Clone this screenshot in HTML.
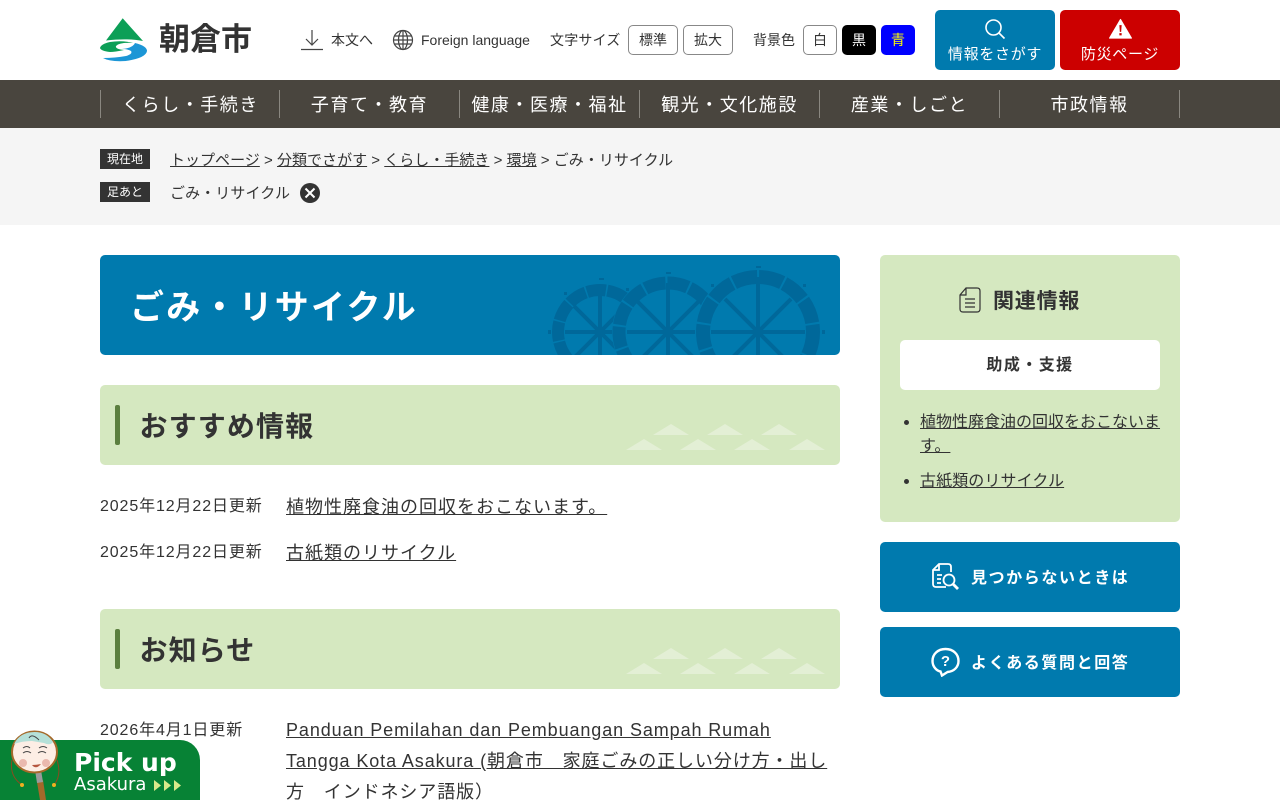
<!DOCTYPE html>
<html lang="ja"><head><meta charset="utf-8"><title>ごみ・リサイクル</title>
<style>
*{box-sizing:border-box}
html,body{margin:0;padding:0;width:1280px;height:800px;overflow:hidden;background:#fff}
body{font-family:"Liberation Sans","Noto Sans CJK JP",sans-serif;color:#333;position:relative}
.a{position:absolute;white-space:nowrap}
a{color:#333;text-decoration:underline}
.btn{position:absolute;border:1px solid #888;border-radius:5px;background:#fff;font-size:14px;text-align:center;line-height:28px;height:30px;color:#333}
.nav{position:absolute;top:90px;height:28px;width:180px;border-left:1px solid #8a8780;color:#fff;font-size:18px;letter-spacing:.085em;line-height:30px;text-align:center}
.lbl{position:absolute;left:100px;width:50px;height:20px;background:#333;color:#fff;font-size:12px;line-height:21px;text-align:center}
.h2{position:absolute;left:100px;width:740px;height:80px;background:#d5e8c0;border-radius:5px;overflow:hidden}
.h2 i{position:absolute;left:15px;top:20px;width:5px;height:40px;background:#5b7f3f;border-radius:2px}
.h2 b{position:absolute;left:39.500px;top:22px;font-size:28px;line-height:40px;letter-spacing:.04em;color:#333;font-weight:700;white-space:nowrap}
.h2 svg{position:absolute;left:0;top:0}
.date{position:absolute;left:100px;font-size:16px;letter-spacing:.055em;white-space:nowrap;line-height:24px}
.lnk{position:absolute;left:286px;font-size:18px;letter-spacing:1px;line-height:31px;white-space:nowrap}
.blue{position:absolute;left:880px;width:300px;height:70px;background:#007aae;border-radius:5px}
</style></head><body>

<!-- logo -->
<svg class="a" style="left:100px;top:18px" width="48" height="44" viewBox="0 0 48 44">
<path d="M22.700 0.300L43 23Q28 20 6 22.500Z" fill="#0c9f57"/>
<path d="M10 24Q22 22 33 25Q20 24 16 28Q15 31 24 32Q15 34 10 34Q1 33 0 30Q1 26 10 24Z" fill="#0c9f57"/>
<path d="M35 25Q47 28 47 33Q46 40 26 43Q10 44 3 40Q15 40 26 38Q33 36 31 33Q28 31 22 31Q33 30 35 25Z" fill="#1c96d6"/>
</svg>
<div class="a" style="left:159px;top:20px;font-size:31px;line-height:40px;font-weight:700;color:#333">朝倉市</div>

<!-- utility -->
<svg class="a" style="left:300px;top:29px" width="24" height="22" viewBox="0 0 24 22" fill="none" stroke="#444" stroke-width="1.200"><path d="M12 1V15M6 10L12 16L18 10M1 20.500H23"/></svg>
<div class="a" style="left:331px;top:30px;font-size:14px;line-height:20px">本文へ</div>
<svg class="a" style="left:392px;top:29px" width="22" height="22" viewBox="0 0 22 22" fill="none" stroke="#444" stroke-width="1.200"><circle cx="11" cy="11" r="9.500"/><ellipse cx="11" cy="11" rx="4.500" ry="9.500"/><path d="M11 1.500V20.500M2.500 7H19.500M2.500 15H19.500M1.500 11H20.500"/></svg>
<div class="a" style="left:421px;top:30px;font-size:14px;line-height:20px">Foreign language</div>
<div class="a" style="left:550px;top:30px;font-size:14px;line-height:20px;letter-spacing:.2px">文字サイズ</div>
<div class="btn" style="left:628px;top:25px;width:50px">標準</div>
<div class="btn" style="left:683px;top:25px;width:50px">拡大</div>
<div class="a" style="left:753px;top:30px;font-size:14px;line-height:20px">背景色</div>
<div class="btn" style="left:803px;top:25px;width:34px">白</div>
<div class="btn" style="left:842px;top:25px;width:34px;background:#000;border-color:#000;color:#fff">黒</div>
<div class="btn" style="left:881px;top:25px;width:34px;background:#00f;border-color:#00f;color:#ff0">青</div>

<div class="a" style="left:935px;top:10px;width:120px;height:60px;background:#007aae;border-radius:5px"></div>
<svg class="a" style="left:984px;top:18px" width="22" height="22" viewBox="0 0 22 22" fill="none" stroke="#fff" stroke-width="1.600"><circle cx="9.500" cy="9.500" r="7.500"/><path d="M15 15L20.500 20.500"/></svg>
<div class="a" style="left:935px;top:43px;width:120px;text-align:center;color:#fff;font-size:15px;line-height:23px;letter-spacing:.7px">情報をさがす</div>
<div class="a" style="left:1060px;top:10px;width:120px;height:60px;background:#c00;border-radius:5px"></div>
<svg class="a" style="left:1109px;top:18px" width="23" height="21" viewBox="0 0 24 21"><path d="M12 1L23.500 20.500H.5Z" fill="#fff" stroke="#fff" stroke-linejoin="round"/><path d="M10.800 7H13.200L12.700 14H11.300ZM10.800 15.300H13.200V17.700H10.800Z" fill="#c00"/></svg>
<div class="a" style="left:1060px;top:43px;width:120px;text-align:center;color:#fff;font-size:15px;line-height:23px;letter-spacing:.7px">防災ページ</div>

<!-- nav -->
<div class="a" style="left:0;top:80px;width:1280px;height:48px;background:#49453e"></div>
<div class="nav" style="left:100px">くらし・手続き</div>
<div class="nav" style="left:279px">子育て・教育</div>
<div class="nav" style="left:459px">健康・医療・福祉</div>
<div class="nav" style="left:639px">観光・文化施設</div>
<div class="nav" style="left:819px">産業・しごと</div>
<div class="nav" style="left:999px;width:181px;border-right:1px solid #8a8780">市政情報</div>

<!-- breadcrumb -->
<div class="a" style="left:0;top:128px;width:1280px;height:97px;background:#f5f5f5"></div>
<div class="lbl" style="top:149px">現在地</div>
<div class="a" style="left:170px;top:150px;font-size:15px;line-height:22px;letter-spacing:.02px"><a href="#">トップページ</a> &gt; <a href="#">分類でさがす</a> &gt; <a href="#">くらし・手続き</a> &gt; <a href="#">環境</a> &gt; ごみ・リサイクル</div>
<div class="lbl" style="top:182px">足あと</div>
<div class="a" style="left:170px;top:183px;font-size:15px;line-height:22px;letter-spacing:.1px">ごみ・リサイクル</div>
<svg class="a" style="left:300px;top:183px" width="20" height="20" viewBox="0 0 20 20"><circle cx="10" cy="10" r="10" fill="#333"/><path d="M5.500 5.500L14.500 14.500M14.500 5.500L5.500 14.500" stroke="#fff" stroke-width="2"/></svg>

<!-- title -->
<div class="a" style="left:100px;top:255px;width:740px;height:100px;background:#007aae;border-radius:5px;overflow:hidden">
<svg style="position:absolute;left:430px;top:0" width="310" height="100" viewBox="530 255 310 100" fill="none" stroke="#00689a">
<g fill="#00689a" stroke="none"><rect x="548" y="330" width="3" height="4"/><rect x="609" y="330" width="3" height="4"/><rect x="692" y="330" width="3" height="4"/><rect x="822" y="330" width="3" height="4"/><rect x="599" y="278" width="5" height="2"/><rect x="666" y="272" width="5" height="2"/><rect x="756" y="266" width="5" height="2"/><rect x="564" y="292" width="3" height="3"/><rect x="626" y="288" width="3" height="3"/><rect x="711" y="284" width="3" height="3"/><rect x="803" y="284" width="3" height="3"/></g>
<circle cx="600" cy="332" r="42" stroke-width="12" stroke-dasharray="19 1.500"/>
<path d="M600 290V360M565 332H640M574 306L626 358M626 306L574 358" stroke-width="4"/>
<circle cx="668" cy="332" r="56" fill="#007aae" stroke="none"/>
<circle cx="668" cy="332" r="49" stroke-width="13" stroke-dasharray="21 2"/>
<path d="M668 283V360M627 332H708M636 300L700 364M700 300L636 364" stroke-width="4"/>
<circle cx="758" cy="332" r="63" fill="#007aae" stroke="none"/>
<circle cx="758" cy="332" r="55" stroke-width="14" stroke-dasharray="24 2"/>
<path d="M758 277V360M711 332H805M725 299L791 365M791 299L725 365" stroke-width="4"/>
</svg>
<div class="a" style="left:30px;top:27px;font-size:34px;line-height:52px;font-weight:700;letter-spacing:2.200px;color:#fff">ごみ・リサイクル</div>
</div>

<!-- sec 1 -->
<div class="h2" style="top:385px"><i></i><b>おすすめ情報</b>
<svg width="740" height="80" fill="#e3efd5"><path d="M553 50L571 39L589 50ZM607 50L625 39L643 50ZM661 50L679 39L697 50ZM526 65L544 54L562 65ZM580 65L598 54L616 65ZM634 65L652 54L670 65ZM689 65L707 54L725 65Z"/></svg></div>
<div class="date" style="top:495px">2025年12月22日更新</div>
<div class="lnk" style="top:492px"><a href="#">植物性廃食油の回収をおこないます。</a></div>
<div class="date" style="top:541px">2025年12月22日更新</div>
<div class="lnk" style="top:538px"><a href="#">古紙類のリサイクル</a></div>

<!-- sec 2 -->
<div class="h2" style="top:609px"><i></i><b>お知らせ</b>
<svg width="740" height="80" fill="#e3efd5"><path d="M553 50L571 39L589 50ZM607 50L625 39L643 50ZM661 50L679 39L697 50ZM526 65L544 54L562 65ZM580 65L598 54L616 65ZM634 65L652 54L670 65ZM689 65L707 54L725 65Z"/></svg></div>
<div class="date" style="top:719px">2026年4月1日更新</div>
<div class="lnk" style="top:715px;letter-spacing:.9px"><a href="#">Panduan Pemilahan dan Pembuangan Sampah Rumah<br>Tangga Kota Asakura (朝倉市　家庭ごみの正しい分け方・出し</a><br><span>方　インドネシア語版）</span></div>

<!-- sidebar -->
<div class="a" style="left:880px;top:255px;width:300px;height:267px;background:#d5e8c0;border-radius:5px"></div>
<svg class="a" style="left:959px;top:287px" width="22" height="26" viewBox="0 0 22 26" fill="none" stroke="#333" stroke-width="1.200"><path d="M7 1H18Q21 1 21 4V22Q21 25 18 25H4Q1 25 1 22V8ZM7 1V8H1M6 12H16M6 16H16M6 20H16"/></svg>
<div class="a" style="left:993px;top:287px;font-size:21px;line-height:30px;font-weight:700;letter-spacing:.8px">関連情報</div>
<div class="a" style="left:900px;top:340px;width:260px;height:50px;background:#fff;border-radius:5px;text-align:center;font-size:16px;font-weight:700;line-height:51px;letter-spacing:.09em">助成・支援</div>
<div class="a" style="left:904px;top:420px;width:5px;height:5px;border-radius:50%;background:#333"></div>
<div class="a" style="left:920px;top:411px;font-size:16px;line-height:24px"><a href="#">植物性廃食油の回収をおこないま<br>す。</a></div>
<div class="a" style="left:904px;top:479px;width:5px;height:5px;border-radius:50%;background:#333"></div>
<div class="a" style="left:920px;top:469px;font-size:16px;line-height:26px;letter-spacing:.1px"><a href="#">古紙類のリサイクル</a></div>

<div class="blue" style="top:542px"></div>
<svg class="a" style="left:931px;top:562px" width="28" height="30" viewBox="0 0 28 30" fill="none" stroke="#fff" stroke-width="1.800"><path d="M15 25H5Q2 25 2 22V8L8 2H17Q20 2 20 5V10M8 2V8H2M6 13H11M6 17H10M6 21H10"/><circle cx="18" cy="18" r="5.500"/><path d="M22 22L27 27" stroke-width="2.800"/></svg>
<div class="a" style="left:971px;top:567px;font-size:16px;line-height:24px;font-weight:700;letter-spacing:.1em;color:#fff">見つからないときは</div>
<div class="blue" style="top:627px"></div>
<svg class="a" style="left:931px;top:647px" width="29" height="30" viewBox="0 0 29 30" fill="none" stroke="#fff" stroke-width="2.400"><path d="M14.500 2C7 2 1.500 7 1.500 14C1.500 20 6 24 9.500 24.500L11 28.500L16.500 25C23 24.500 27.500 20 27.500 14C27.500 7 22 2 14.500 2Z"/><text x="14.500" y="19" font-size="15" font-weight="700" fill="#fff" stroke="none" text-anchor="middle" font-family="Liberation Sans">?</text></svg>
<div class="a" style="left:971px;top:652px;font-size:16px;line-height:24px;font-weight:700;letter-spacing:.1em;color:#fff">よくある質問と回答</div>

<!-- pick up -->
<div class="a" style="left:0;top:740px;width:200px;height:60px;background:#078235;border-radius:0 20px 0 0"></div>
<svg class="a" style="left:0;top:720px" width="70" height="80" viewBox="0 0 70 80">
<path d="M12 40Q9 56 22 65M57 40Q62 55 54 65" fill="none" stroke="#8a4a20" stroke-width="1"/>
<circle cx="22" cy="65" r="2" fill="#f0b020"/><circle cx="54" cy="65" r="2" fill="#f0b020"/>
<path d="M37 62L43 60L46 80H40Z" fill="#a4692a"/><path d="M35 50L41 50L43 62L37 63Z" fill="#9a9a9a"/>
<ellipse cx="34.500" cy="32" rx="22.500" ry="20.500" fill="#fdeee5" stroke="#a4692a" stroke-width="2"/>
<path d="M14 24Q20 12 34.500 12Q47 12 53 22Q50 26 44 23L32 21Q22 21 14 24Z" fill="#b5e0d8"/>
<path d="M29 18Q32 13 39 20" fill="none" stroke="#444" stroke-width="1"/>
<circle cx="23" cy="43" r="4" fill="#eab9ae"/><circle cx="46" cy="43" r="4" fill="#eab9ae"/>
<path d="M23 33Q27 30 31 33M38 33Q42 30 46 33M23 28Q27 25 30 28M39 28Q43 25 47 28" fill="none" stroke="#444" stroke-width="1"/>
<path d="M32 45Q36 50 41 44Q36 45 32 45Z" fill="#b5563f"/>
</svg>
<div class="a" style="left:74px;top:745px;font-family:'DejaVu Sans',sans-serif;font-size:25px;line-height:36px;font-weight:700;color:#fff">Pick up</div>
<div class="a" style="left:74px;top:773px;font-family:'DejaVu Sans',sans-serif;font-size:18px;line-height:24px;color:#fff">Asakura</div>
<svg class="a" style="left:153px;top:779px" width="29" height="13" viewBox="0 0 29 13" fill="#dbe98a"><path d="M1 1L8 6.500L1 12ZM11 1L18 6.500L11 12ZM21 1L28 6.500L21 12Z"/></svg>
</body></html>
